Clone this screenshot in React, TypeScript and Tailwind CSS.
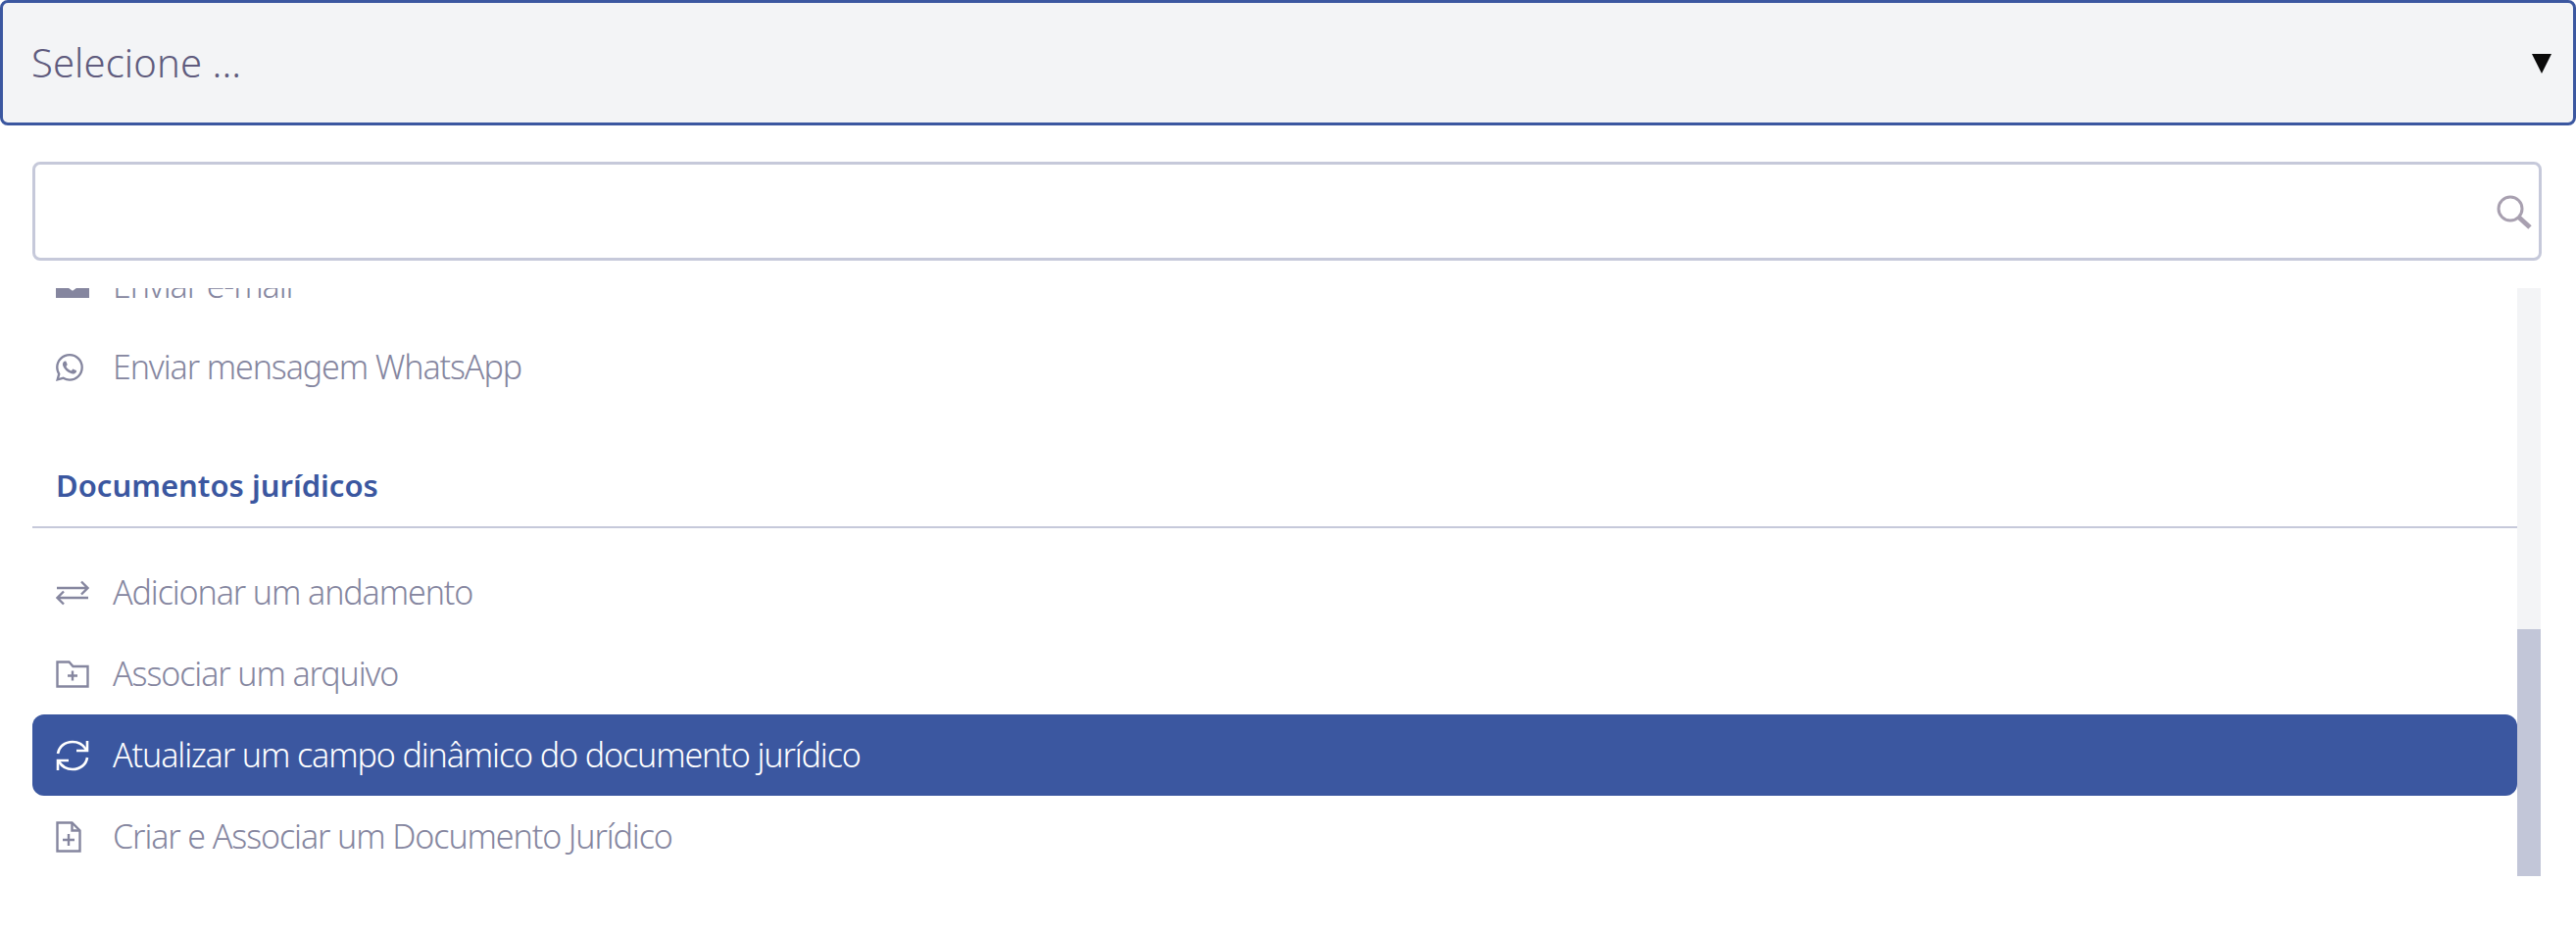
import React from "react";
import { BsWhatsapp } from "react-icons/bs";

const font = "font-['Noto_Sans','Open_Sans',sans-serif]";

const ArrowsIcon = () => (
  <svg width="34" height="26" viewBox="0 0 34 26" fill="none" stroke="currentColor" strokeWidth="2.4">
    <path d="M1 8h31M26 1.500 32.500 8 26 14.500" />
    <path d="M33 18H2M8 11.500 1.500 18 8 24.500" />
  </svg>
);

const FolderPlusIcon = () => (
  <svg width="34" height="28" viewBox="0 0 34 28" fill="none" stroke="currentColor" strokeWidth="2.4">
    <path d="M1.500 26.500V1.500h12l4 4.500h15v20.500z" />
    <path d="M17 10.500v10M12 15.500h10" />
  </svg>
);

const RefreshIcon = () => (
  <svg width="34" height="32" viewBox="0 0 34 32" fill="none" stroke="currentColor" strokeWidth="2.6">
    <path d="M2 14C3 7 9 2 17 2c6 0 11 3 14 8" />
    <path d="M32 1v10H21" />
    <path d="M32 18c-1 7-7 12-15 12-6 0-11-3-14-8" />
    <path d="M2 31V21h11" />
  </svg>
);

const FilePlusIcon = () => (
  <svg width="26" height="32" viewBox="0 0 26 32" fill="none" stroke="currentColor" strokeWidth="2.4">
    <path d="M1.500 1.500h15l8 8v21h-23z" />
    <path d="M16.500 1.500v8h8" />
    <path d="M13 13v12M7 19h12" />
  </svg>
);

const MailIcon = () => (
  <svg width="34" height="24" viewBox="0 0 34 24" fill="currentColor">
    <path d="M0 3a3 3 0 0 1 3-3h28a3 3 0 0 1 3 3v21H0z" />
    <path d="M2 4l15 11L32 4" fill="none" stroke="white" strokeWidth="3" />
  </svg>
);

const rows = [
  { label: "Adicionar um andamento", icon: <ArrowsIcon /> },
  { label: "Associar um arquivo", icon: <FolderPlusIcon /> },
  { label: "Atualizar um campo dinâmico do documento jurídico", icon: <RefreshIcon />, active: true },
  { label: "Criar e Associar um Documento Jurídico", icon: <FilePlusIcon /> },
];

const Row = ({
  label,
  icon,
  active,
}: {
  label: string;
  icon: React.ReactNode;
  active?: boolean;
}) => (
  <div
    className={`flex h-[83px] items-center rounded-xl pl-6 ${
      active ? "bg-[#3b57a0] text-white" : "text-[#85869f]"
    }`}
  >
    <span className="flex w-[58px] shrink-0 items-center">{icon}</span>
    <span className="text-[34px] font-light tracking-[-1.1px]">{label}</span>
  </div>
);

export default function App() {
  return (
    <div className={`h-[950px] w-[2628px] overflow-hidden rounded-b-2xl bg-white ${font}`}>
      <div className="flex h-[128px] items-center justify-between rounded-lg border-[3px] border-[#3b57a0] bg-[#f3f4f6] pl-[29px] pr-[22px]">
        <span className="text-[40px] font-light tracking-[0.1px] text-[#5f5b7d]">Selecione ...</span>
        <svg width="20" height="20" viewBox="0 0 20 20" className="mt-[2px]">
          <path d="M0 0h20L10 20z" fill="#0a0a0a" />
        </svg>
      </div>

      <div className="px-[33px] pt-[37px]">
        <div className="flex h-[101px] w-[2560px] items-center justify-end rounded-lg border-[3px] border-[#c6c9da] bg-white pr-[7px]">
          <svg width="36" height="36" viewBox="0 0 36 36" fill="none" stroke="#a8a0b0" className="mt-[2px]">
            <circle cx="14" cy="14" r="12" strokeWidth="3" />
            <path d="M23 23l11 10" strokeWidth="5" />
          </svg>
        </div>

        <div className="mt-[28px] flex h-[600px] w-[2559px]">
          <div className="min-w-0 flex-1 overflow-hidden">
            <div className="-mt-[44px]">
              <Row label="Enviar e-mail" icon={<MailIcon />} />
              <Row label="Enviar mensagem WhatsApp" icon={<BsWhatsapp size={28} />} />
              <div className="mt-[58px] border-b-2 border-[#c6c9da] pb-[21px] pl-6 text-[31px] font-semibold leading-[42px] text-[#3b57a0]">
                Documentos jurídicos
              </div>
              <div className="mt-[24px]">
                {rows.map((r) => (
                  <Row key={r.label} {...r} />
                ))}
              </div>
            </div>
          </div>
          <div className="flex w-[24px] flex-col justify-end bg-[#f3f4f6]">
            <div className="h-[252px] bg-[#c2c6d8]" />
          </div>
        </div>
      </div>
    </div>
  );
}
